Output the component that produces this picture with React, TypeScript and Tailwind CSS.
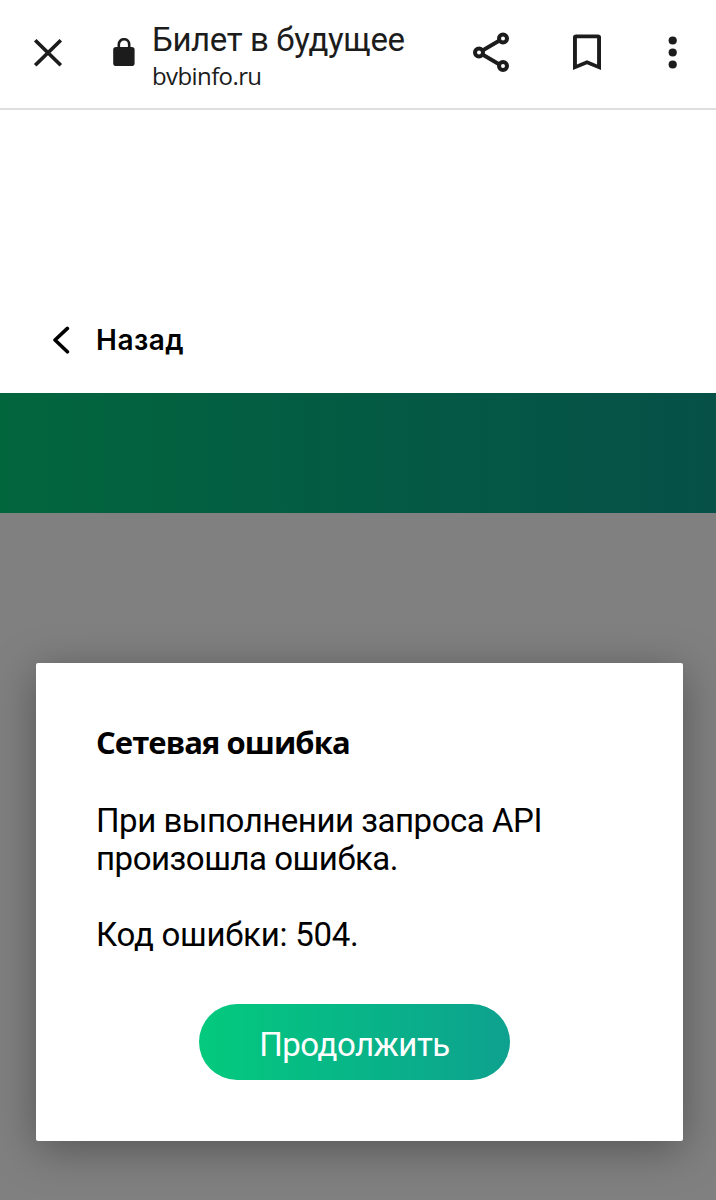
import { useState } from "react";

const t = {
    siteTitle: "Билет в будущее",
    siteUrl: "bvbinfo.ru",
    back: "Назад",
    errorTitle: "Сетевая ошибка",
    errorLines: ["При выполнении запроса API", "произошла ошибка."],
    errorCode: "Код ошибки: 504.",
    proceed: "Продолжить",
};

const CloseIcon = () => (
    <svg className="h-8 w-8" viewBox="0 0 32 32" fill="none" stroke="currentColor" strokeWidth="3.7">
        <path d="M3.2 4.2 28.8 29.2M28.8 4.2 3.2 29.2" />
    </svg>
);

const LockIcon = () => (
    <svg className="h-7 w-[22px]" viewBox="0 0 22 28" fill="none">
        <rect x="0.2" y="9" width="21.4" height="19" rx="2.8" fill="currentColor" />
        <path d="M5.8 10V6.4a5.2 5.2 0 0 1 10.4 0V10" stroke="currentColor" strokeWidth="2.6" />
    </svg>
);

const ShareIcon = () => (
    <svg className="h-10 w-9" viewBox="0 0 36 40" fill="none" stroke="currentColor" strokeWidth="4">
        <circle cx="6" cy="20.5" r="4" />
        <circle cx="30" cy="6.5" r="4" />
        <circle cx="30" cy="34" r="4" />
        <path d="M9.5 18.5 26.5 8.5M9.5 22.5 26.5 32.5" strokeWidth="3.8" />
    </svg>
);

const BookmarkIcon = () => (
    <svg className="h-9 w-7" viewBox="0 0 28 36" fill="currentColor" fillRule="evenodd">
        <path d="M0 36V3.2Q0 0.4 3.2 0.4H24.8Q28 0.4 28 3.2V36L14 30.3ZM3.9 4.2V30.4L14 26.2 24.1 30.4V4.2Z" />
    </svg>
);

const MenuIcon = () => (
    <svg className="h-[33px] w-[9px]" viewBox="0 0 9 33" fill="currentColor">
        <circle cx="4.7" cy="4.5" r="4.1" />
        <circle cx="4.7" cy="16.5" r="4.1" />
        <circle cx="4.7" cy="28.5" r="4.1" />
    </svg>
);

const BackIcon = () => (
    <svg className="h-7 w-[18px]" viewBox="0 0 18 28" fill="none" stroke="currentColor" strokeWidth="3.6" strokeLinecap="round" strokeLinejoin="round">
        <path d="M15.4 2.4 3 14 15.4 25.8" />
    </svg>
);

const App: React.FC = () => {
    const [isOpen, setIsOpen] = useState(true);

    return (
        <div className="flex h-[1200px] w-[716px] flex-col overflow-hidden bg-white font-['Roboto',sans-serif] text-black">
            {/* Browser bar */}
            <header className="flex h-[110px] shrink-0 items-start border-b-2 border-[#dedede] pl-8 text-[#1c1c1c]">
                <button className="mt-9">
                    <CloseIcon />
                </button>
                <div className="mt-[38px] ml-[49px]">
                    <LockIcon />
                </div>
                <div className="mt-5 ml-[17px] w-[321px] whitespace-nowrap">
                    <div className="text-[33px] leading-[40px] tracking-[-0.38px]">
                        <span className="inline-block">{t.siteTitle}</span>
                    </div>
                    <div className="font-['Open_Sans',sans-serif] text-[24px] leading-8 tracking-[-0.6px]">
                        <span className="inline-block">{t.siteUrl}</span>
                    </div>
                </div>
                <button className="mt-[32px]">
                    <ShareIcon />
                </button>
                <button className="mt-[34px] ml-16">
                    <BookmarkIcon />
                </button>
                <button className="mt-9 ml-[67px]">
                    <MenuIcon />
                </button>
            </header>

            {/* Back link */}
            <div className="flex h-[283px] shrink-0 items-end pb-[39px] pl-[52px]">
                <button className="flex h-7 items-center gap-[26px]">
                    <BackIcon />
                    <span className="font-['Inter',sans-serif] text-[28px] font-semibold tracking-[0.5px]">{t.back}</span>
                </button>
            </div>

            <div className="h-[120px] shrink-0 bg-linear-to-r from-[#02663d] to-[#065048]" />

            {/* Dimmed page with the error dialog */}
            <main className="flex-1 bg-[#808080] pt-[150px] pl-9">
                {isOpen && (
                    <section className="flex h-[478px] w-[647px] flex-col rounded-[2px] bg-white px-[60px] pt-[59px] whitespace-nowrap shadow-[0_8px_44px_rgba(0,0,0,0.34)]">
                        <h1 className="font-['Open_Sans',sans-serif] text-[31px] leading-10 font-bold tracking-[-0.95px]">
                            <span className="inline-block">{t.errorTitle}</span>
                        </h1>
                        <div className="mt-10 text-[33px] leading-[38px]">
                            {t.errorLines.map((line) => (
                                <p key={line} className="tracking-[-0.47px]">{line}</p>
                            ))}
                            <p className="mt-[38px] tracking-[-0.25px]">{t.errorCode}</p>
                        </div>
                        <button
                            onClick={() => setIsOpen(false)}
                            className="mt-[50px] ml-[103px] flex h-[76px] w-[311px] shrink-0 items-center justify-center rounded-full bg-linear-to-r from-[#04ca7d] to-[#0ea18f] pt-1.5 text-[33px] tracking-[-0.5px] text-white"
                        >
                            {t.proceed}
                        </button>
                    </section>
                )}
            </main>
        </div>
    );
};

export default App;
